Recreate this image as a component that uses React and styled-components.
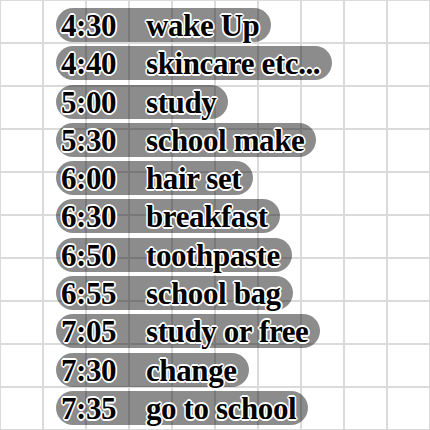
import React from 'react';
import styled, { createGlobalStyle } from 'styled-components';

const GlobalStyle = createGlobalStyle`
  html, body {
    margin: 0;
    padding: 0;
    background: #fff;
  }
`;

const Page = styled.div`
  width: 430px;
  height: 430px;
  box-sizing: border-box;
  overflow: hidden;
  padding: 8px 0 0 56px;
  display: flex;
  flex-direction: column;
  align-items: flex-start;
  gap: 4.3px;
  background-color: #fff;
  background-image:
    linear-gradient(to right, #dadada 0, #dadada 2px, transparent 2px),
    linear-gradient(to bottom, #dadada 0, #dadada 2px, transparent 2px);
  background-size: 43px 43px;
  background-position: -1px -1px;
`;

const Pill = styled.div`
  height: 34px;
  box-sizing: border-box;
  padding: 2px 12px 0 5px;
  border-radius: 17px;
  background: rgba(0, 0, 0, 0.45);
  display: flex;
  align-items: center;
  font-family: "Liberation Serif", "Times New Roman", serif;
  font-weight: bold;
  font-size: 31px;
  letter-spacing: -0.4px;
  line-height: 32px;
  color: #000;
  white-space: nowrap;
  text-shadow:
    1.6px 0 0 #fff, -1.6px 0 0 #fff, 0 1.6px 0 #fff, 0 -1.6px 0 #fff,
    1.1px 1.1px 0 #fff, -1.1px 1.1px 0 #fff, 1.1px -1.1px 0 #fff, -1.1px -1.1px 0 #fff;
`;

const Time = styled.span`
  width: 85px;
  flex: none;
`;

const Task = styled.span``;

const schedule = [
  ['4:30', 'wake Up'],
  ['4:40', 'skincare etc...'],
  ['5:00', 'study'],
  ['5:30', 'school make'],
  ['6:00', 'hair set'],
  ['6:30', 'breakfast'],
  ['6:50', 'toothpaste'],
  ['6:55', 'school bag'],
  ['7:05', 'study or free'],
  ['7:30', 'change'],
  ['7:35', 'go to school'],
];

const App = () => {
  return (
    <>
      <GlobalStyle />
      <Page>
        {schedule.map(([time, task]) => (
          <Pill key={time}>
            <Time>{time}</Time>
            <Task>{task}</Task>
          </Pill>
        ))}
      </Page>
    </>
  );
};

export default App;
